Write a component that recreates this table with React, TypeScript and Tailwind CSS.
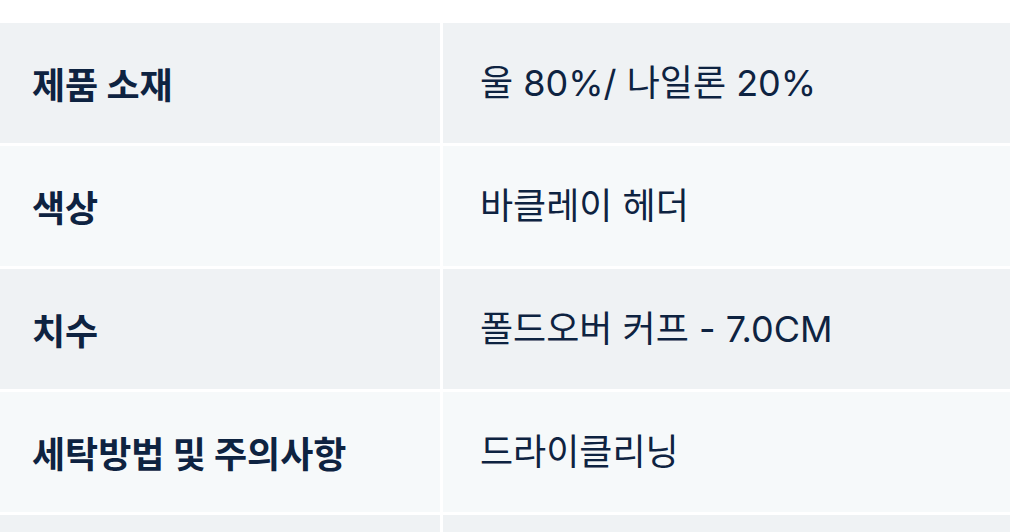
import React from "react";

const rows = [
  ["제품 소재", "울 80%/ 나일론 20%"],
  ["색상", "바클레이 헤더"],
  ["치수", "폴드오버 커프 - 7.0CM"],
  ["세탁방법 및 주의사항", "드라이클리닝"],
  ["", ""],
];

export default function App() {
  return (
    <div
      className="w-[1010px] h-[532px] overflow-hidden bg-white pt-[23px] text-[#0e2341]"
      style={{ fontFamily: '"Inter", "Noto Sans CJK KR", sans-serif' }}
    >
      <div className="flex flex-col gap-[3px]">
        {rows.map(([k, v], i) => (
          <div key={i} className="flex gap-[3px] h-[120px] shrink-0">
            <div
              className={`w-[440px] shrink-0 flex items-center pl-[32px] text-[36px] font-bold ${
                i % 2 === 0 ? "bg-[#eff2f4]" : "bg-[#f6f9fa]"
              }`}
              style={{ fontFamily: '"Noto Sans CJK KR", sans-serif' }}
            >
              {k}
            </div>
            <div
              className={`flex-1 flex items-center pl-[37px] text-[36px] font-normal ${
                i % 2 === 0 ? "bg-[#eff2f4]" : "bg-[#f6f9fa]"
              }`}
            >
              {v}
            </div>
          </div>
        ))}
      </div>
    </div>
  );
}
